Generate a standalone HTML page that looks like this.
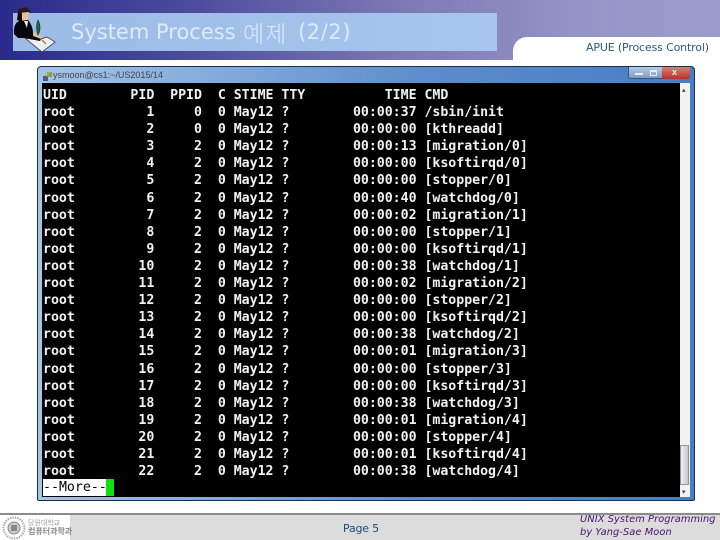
<!DOCTYPE html>
<html><head><meta charset="utf-8">
<style>
html,body{margin:0;padding:0;background:#fff}
#p{position:relative;width:720px;height:540px;overflow:hidden;background:#fff;font-family:"Liberation Sans","Noto Sans CJK KR",sans-serif}
#p div{position:absolute}
#hd{left:0;top:0;width:720px;height:60px;background:linear-gradient(90deg,#2a2a8c 0%,#4a4a9c 25%,#7c78b4 55%,#9494c6 80%,#9c9ccc 100%)}
#bar{left:13px;top:13px;width:484px;height:38px;background:linear-gradient(90deg,#9cbce6,#a6c6ee)}
.tt{top:18px;font:21px/28px "DejaVu Sans","Noto Sans CJK KR",sans-serif;color:#dfeafa;white-space:nowrap}
#tab{left:513px;top:37px;width:207px;height:23px;background:#fff;border-top-left-radius:14px}
#apue{left:586px;top:41px;font:11px/14px "DejaVu Sans",sans-serif;letter-spacing:-.15px;color:#2a5a80;white-space:nowrap}
#win{left:37px;top:66px;width:658px;height:435px;background:linear-gradient(90deg,#a4c4e8,#5c8ccc 60%,#4a7cc4);border:1px solid #1a3050;border-radius:4px 4px 2px 2px;box-sizing:border-box}
#wt{left:15px;top:3px;font:9px/11px "Liberation Sans",sans-serif;color:#444;white-space:nowrap}
#term{left:4px;top:16px;width:638px;height:414px;background:#000}
#sb{left:642px;top:16px;width:10px;height:414px;background:#f0f2f4}
#th{left:642px;top:378px;width:9px;height:40px;background:linear-gradient(90deg,#eef0f2,#c4c8cc);border:1px solid #909498;box-sizing:border-box}
#btn{left:590px;top:0;width:62px;height:12px;border:1px solid #39557a;border-top:0;box-sizing:border-box;border-radius:0 0 3px 3px;background:linear-gradient(180deg,#b8cce4,#7c9cc4)}
pre{position:absolute;left:5px;top:20px;margin:0;font:bold 13.25px/17.1px "DejaVu Sans Mono",monospace;color:#f2f2f2;letter-spacing:-.03px}
#more{left:5px;top:412px;width:63px;height:17px;background:#fff;color:#000;font:13.25px/17px "DejaVu Sans Mono",monospace;white-space:pre}
#cur{left:68px;top:412px;width:8px;height:17px;background:#10e010}
#fl{left:0;top:513px;width:720px;height:2px;background:#8c8c8c}
#ft{left:0;top:515px;width:720px;height:25px;background:#dcdcdc}
#logo{left:0;top:515px;width:70px;height:25px;background:#fff}
#pg{left:343px;top:522px;font:11px/14px "DejaVu Sans",sans-serif;color:#1c4a78;letter-spacing:-.2px}
#ux{left:580px;top:514px;font:italic 9.8px/12.5px "DejaVu Sans",sans-serif;color:#4a1070;white-space:nowrap;letter-spacing:.1px}
</style></head><body>
<div id="p">
<div id="hd"></div>
<div id="bar"></div>
<div class="tt" style="left:71px">System Process</div>
<div class="tt" style="left:243px;font-size:23px;letter-spacing:1px;font-family:'Noto Sans CJK KR',sans-serif;font-weight:300">예제</div>
<div class="tt" style="left:298px;letter-spacing:.6px">(2/2)</div>
<svg style="position:absolute;left:0;top:0" width="60" height="60" viewBox="0 0 60 60">
<polygon points="25,38 42,52 55,42 47,37 38,40" fill="#eef0f8" stroke="#223" stroke-width=".7"/>
<path d="M17 10 L26 7 L31 12 L21 14Z" fill="#2a1c14"/>
<path d="M19 13 L29 12 L28 20 L22 21Z" fill="#e4c4a4"/>
<path d="M18 12 L22 13 L22 22 L17 20Z" fill="#140c08"/>
<path d="M14 34 Q13 24 19 21 L28 20 Q33 26 33 33 L42 37 L40 41 L30 39 L25 38 L18 38Z" fill="#06060c"/>
<path d="M24 21 L28 21 L27 28Z" fill="#f0f0f0"/>
<path d="M33 32 L43 36 L41 39 L33 36Z" fill="#dcbc9c"/>
<path d="M38 20 Q35 27 38 35 Q42 28 38 20Z" fill="#2a6a3a" stroke="#0c2c14" stroke-width=".6"/>
<path d="M42 40 L46 44" stroke="#b08818" stroke-width="1.5"/>
</svg>
<div id="tab"></div>
<div id="apue">APUE (Process Control)</div>
<div id="win">
<svg style="position:absolute;left:4px;top:4px" width="11" height="11" viewBox="0 0 11 11"><rect x="1" y="5" width="5" height="5" fill="#4a5a8a"/><rect x="5" y="1" width="5" height="5" fill="#8a9a5a"/><path d="M3 5 L8 1" stroke="#d0b030"/></svg>
<div id="wt">ysmoon@cs1:~/US2015/14</div>
<div id="btn"></div>
<div style="left:624px;top:0;width:28px;height:12px;background:linear-gradient(180deg,#d88078,#b83028);border-radius:0 0 3px 0"></div>
<div style="left:634px;top:2px;font:bold 9px/7px 'Liberation Sans',sans-serif;color:#f4f0e8">x</div>
<div style="left:597px;top:6px;width:8px;height:2px;background:#e8eef4"></div>
<div style="left:612px;top:3px;width:7px;height:6px;border:1px solid #e8eef4;border-top-width:2px;box-sizing:border-box"></div>
<div id="term"></div>
<div id="sb"></div>
<div id="th"></div>
<div style="left:644px;top:20px;color:#444;font:7px/7px 'DejaVu Sans',sans-serif">▴</div>
<div style="left:644px;top:422px;color:#444;font:7px/7px 'DejaVu Sans',sans-serif">▾</div>
<pre>UID        PID  PPID  C STIME TTY          TIME CMD
root         1     0  0 May12 ?        00:00:37 /sbin/init
root         2     0  0 May12 ?        00:00:00 [kthreadd]
root         3     2  0 May12 ?        00:00:13 [migration/0]
root         4     2  0 May12 ?        00:00:00 [ksoftirqd/0]
root         5     2  0 May12 ?        00:00:00 [stopper/0]
root         6     2  0 May12 ?        00:00:40 [watchdog/0]
root         7     2  0 May12 ?        00:00:02 [migration/1]
root         8     2  0 May12 ?        00:00:00 [stopper/1]
root         9     2  0 May12 ?        00:00:00 [ksoftirqd/1]
root        10     2  0 May12 ?        00:00:38 [watchdog/1]
root        11     2  0 May12 ?        00:00:02 [migration/2]
root        12     2  0 May12 ?        00:00:00 [stopper/2]
root        13     2  0 May12 ?        00:00:00 [ksoftirqd/2]
root        14     2  0 May12 ?        00:00:38 [watchdog/2]
root        15     2  0 May12 ?        00:00:01 [migration/3]
root        16     2  0 May12 ?        00:00:00 [stopper/3]
root        17     2  0 May12 ?        00:00:00 [ksoftirqd/3]
root        18     2  0 May12 ?        00:00:38 [watchdog/3]
root        19     2  0 May12 ?        00:00:01 [migration/4]
root        20     2  0 May12 ?        00:00:00 [stopper/4]
root        21     2  0 May12 ?        00:00:01 [ksoftirqd/4]
root        22     2  0 May12 ?        00:00:38 [watchdog/4]</pre>
<div id="more">--More--</div>
<div id="cur"></div>
</div>
<div id="ft"></div>
<div id="fl"></div>
<div id="logo"></div>
<svg style="position:absolute;left:2px;top:516px" width="26" height="24" viewBox="0 0 26 24"><circle cx="12" cy="12" r="10.5" fill="none" stroke="#aaa" stroke-width="2" stroke-dasharray="1.5 1"/><circle cx="12" cy="12" r="6" fill="#ccc" stroke="#888"/><rect x="9" y="9" width="6" height="6" fill="#888"/></svg>
<div style="left:28px;top:519px;font:7px/8px 'Noto Sans CJK KR',sans-serif;color:#999;white-space:nowrap">당원대학교</div>
<div style="left:28px;top:527px;font:bold 8px/10px 'Noto Sans CJK KR',sans-serif;color:#888;white-space:nowrap">컴퓨터과학과</div>
<div id="pg">Page 5</div>
<div id="ux">UNIX System Programming<br>by Yang-Sae Moon</div>
</div>
</body></html>
